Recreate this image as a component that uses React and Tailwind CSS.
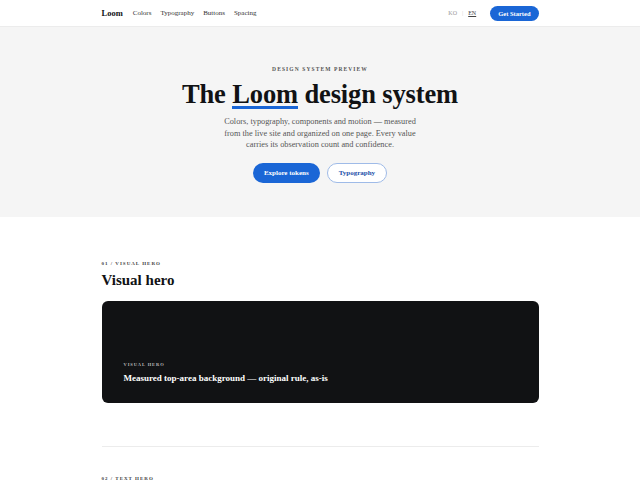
import React from 'react';

const serif = { fontFamily: '"Liberation Serif", "DejaVu Serif", serif' };

export default function App() {
  return (
    <div className="min-h-screen bg-white text-[#111214]" style={serif}>
      {/* nav */}
      <header className="h-[27px] border-b border-[#ececec] bg-white">
        <div className="mx-auto flex h-full w-[437px] items-center justify-between pt-[1px]">
          <div className="flex items-center">
            <span className="text-[8.5px] font-bold">Loom</span>
            <nav className="ml-[10px] flex gap-[9px] text-[7px] text-[#333]">
              <span>Colors</span>
              <span>Typography</span>
              <span>Buttons</span>
              <span>Spacing</span>
            </nav>
          </div>
          <div className="flex items-center">
            <span className="text-[6px] text-[#999]">KO</span>
            <span className="mx-[5px] text-[6px] text-[#ccc]">|</span>
            <span className="text-[6px] text-[#444] underline">EN</span>
            <button className="ml-[14px] h-[15px] rounded-full bg-[#1a66d6] px-[8px] text-[6.5px] font-bold text-white">
              Get Started
            </button>
          </div>
        </div>
      </header>

      {/* hero */}
      <section className="flex h-[190px] flex-col items-center bg-[#f5f5f5] pt-[38px]">
        <div className="text-[5.5px] font-bold tracking-[0.2em] text-[#555]">DESIGN SYSTEM PREVIEW</div>
        <h1 className="mt-[6px] text-[26.5px] font-bold leading-[30px] tracking-[-0.005em]">
          The{' '}
          <span className="relative inline-block">
            Loom
            <span className="absolute bottom-[0px] left-0 right-0 h-[3px] bg-[#1a66d6]"></span>
          </span>{' '}
          design system
        </h1>
        <p className="mt-[7px] w-[200px] text-center text-[8.3px] leading-[11.5px] text-[#555]">
          Colors, typography, components and motion — measured from the live site and organized on one page. Every value carries its observation count and confidence.
        </p>
        <div className="mt-[12px] flex gap-[7px]">
          <button className="h-[20px] rounded-full bg-[#1a66d6] px-[11px] text-[7px] font-bold text-white">
            Explore tokens
          </button>
          <button className="h-[20px] rounded-full border border-[#9fbbe8] bg-white px-[11px] text-[7px] font-bold text-[#1a4fa8]">
            Typography
          </button>
        </div>
      </section>

      {/* section 01 */}
      <section className="mx-auto w-[437px] pt-[43px]">
        <div className="text-[5px] font-bold tracking-[0.2em] text-[#444]">01 / VISUAL HERO</div>
        <h2 className="mt-[2px] text-[15px] font-bold leading-[20px]">Visual hero</h2>
        <div className="mt-[11px] flex h-[102px] flex-col justify-end rounded-[6px] bg-[#111214] px-[22px] pb-[17px]">
          <div className="text-[4.5px] font-bold tracking-[0.2em] text-[#bbb]">VISUAL HERO</div>
          <div className="mt-[3px] text-[9px] font-bold text-white">
            Measured top-area background — original rule, as-is
          </div>
        </div>
        <div className="mt-[43px] border-t border-[#ececec]"></div>
        <div className="mt-[28px] text-[5px] font-bold tracking-[0.2em] text-[#444]">02 / TEXT HERO</div>
      </section>
    </div>
  );
}
